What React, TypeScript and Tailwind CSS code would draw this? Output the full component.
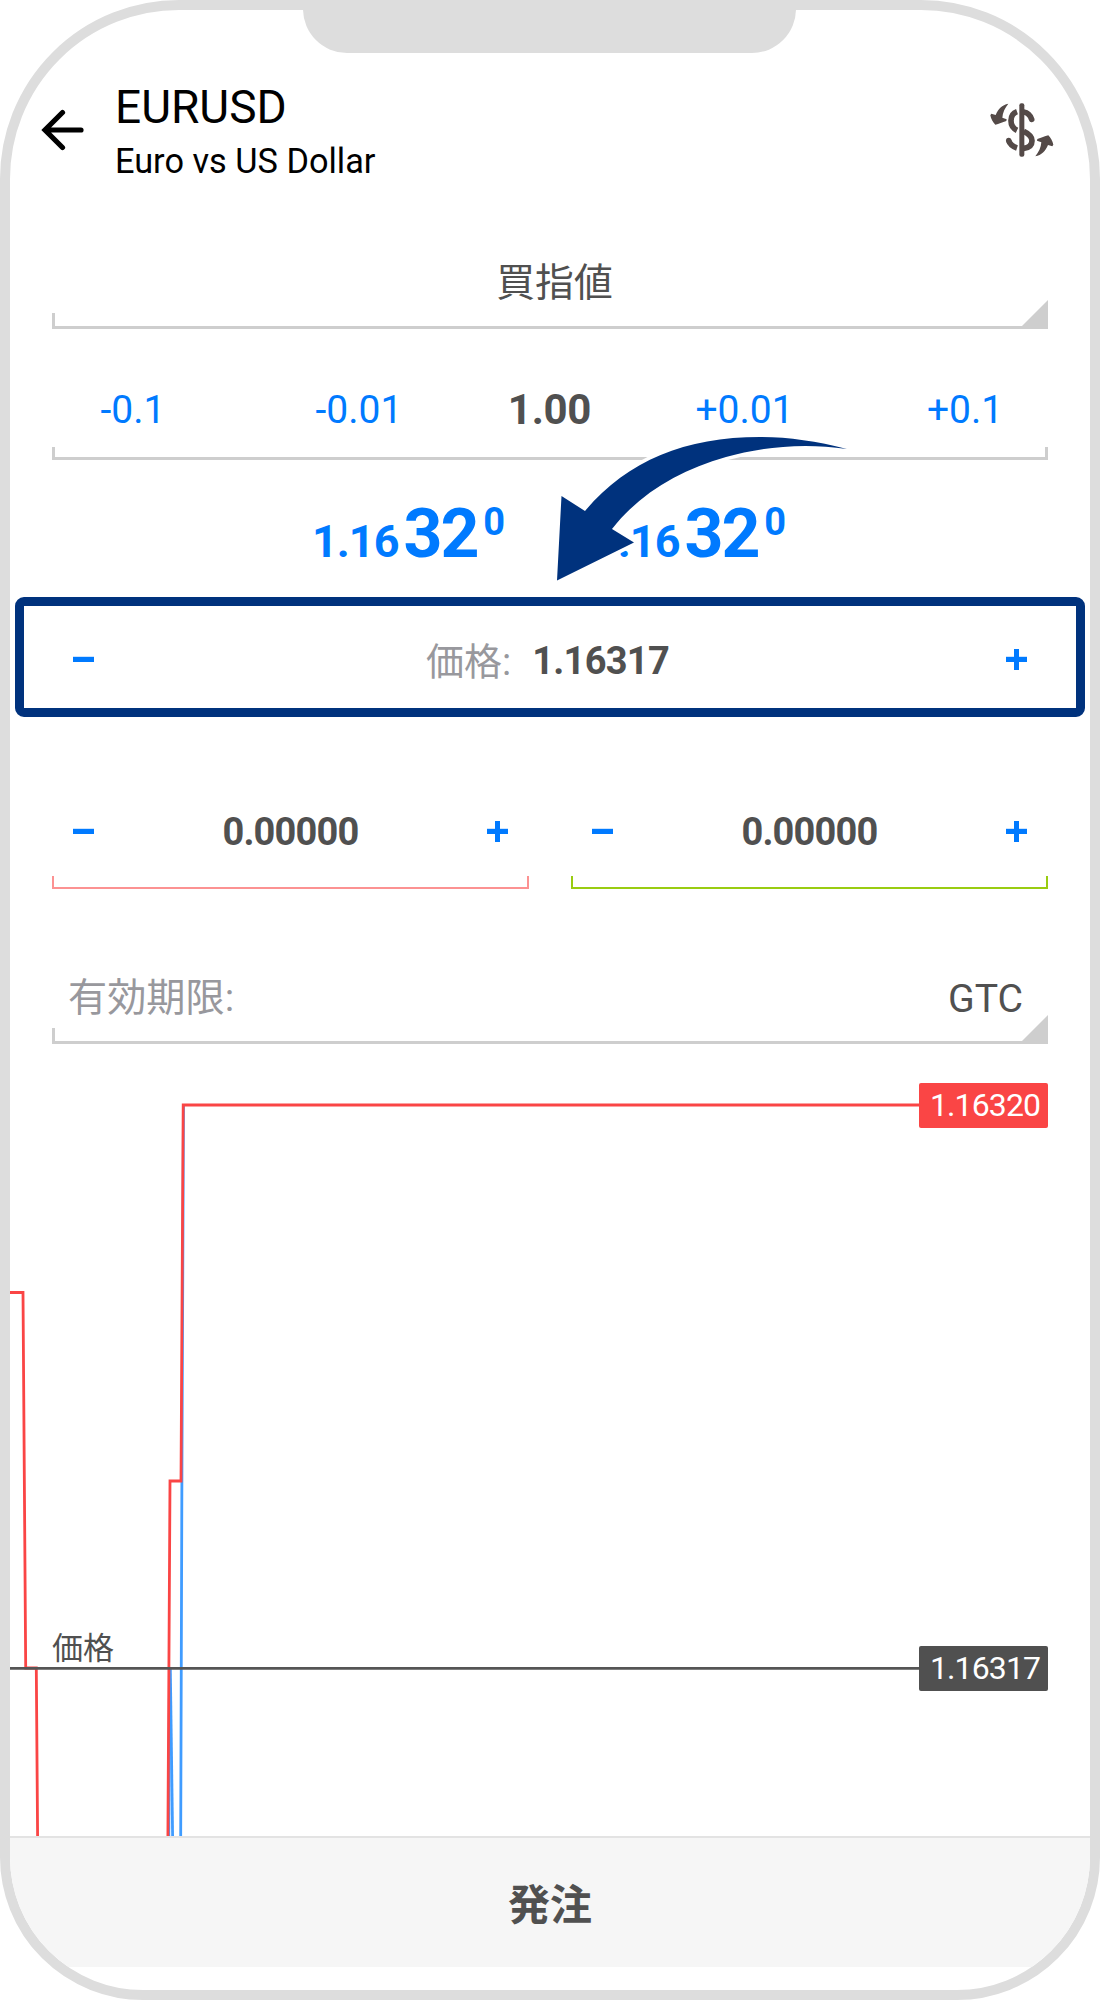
import { useState } from "react";
import clsx from "clsx";

const Bracket = ({ className }: { className: string }) => (
  <div className={clsx("w-full border-t-0", className)} />
);

const Corner = () => (
  <svg className="absolute right-0 bottom-0" width="26" height="29" viewBox="0 0 26 29">
    <path d="M26 0V29H0V26Z" fill="#cecece" />
  </svg>
);

interface StepButtonProps {
  kind: "minus" | "plus";
  onClick: () => void;
}

const StepButton: React.FC<StepButtonProps> = ({ kind, onClick }) => (
  <button type="button" onClick={onClick} aria-label={kind}>
    <svg width="21" height="21" viewBox="0 0 21 21" fill="#007aff">
      <rect x="0" y="7.8" width="21" height="5.2" />
      {kind === "plus" && <rect x="8" y="0" width="5" height="21" />}
    </svg>
  </button>
);

const BackArrow = () => (
  <svg width="44" height="42" viewBox="0 0 44 42" fill="none" stroke="#000" strokeWidth="5.2" strokeLinecap="round">
    <path d="M21.5 3.5L4 21L21.5 38.5M5 21H40" />
  </svg>
);

const TradeIcon = () => (
  <svg width="64" height="54" viewBox="89 67 192 162" fill="#544a48">
    <rect x="177" y="68" width="15" height="160" rx="6" />
    <g fill="none" stroke="#544a48" strokeWidth="17">
      <path d="M170 93C147 101 145 137 170 149" />
      <path d="M190 94C202 96 210 104 214 116" strokeLinecap="round" />
      <path d="M190 152C207 160 215 168 215 180C215 193 206 201 190 203" />
      <path d="M145 180C149 192 158 198 170 202" />
    </g>
    <circle cx="145" cy="179" r="8" />
    <path d="M144 69C125 73 114 84 106 103L93 99L90 104C92 115 98 125 105 132L113 130C121 126 129 125 138 121L139 116L126 111C127 95 134 81 144 69Z" />
    <path d="M225 227C244 223 255 212 263 193L276 197L279 192C277 181 271 171 264 164L256 166C248 170 240 171 231 175L230 180L243 185C242 201 235 215 225 227Z" />
  </svg>
);

const PointerArrow = () => (
  <svg className="absolute left-[536px] top-[417px]" width="310" height="164" viewBox="546 427 310 164">
    <g fill="none" stroke="#fff" strokeWidth="7">
      <path d="M585 511C627 461 685 437 757 437C787 437 816 441 846 449" />
      <path d="M846 449C800 442 758 448 726 457C680 470 640 493 612 529" />
      <path d="M632 543.5L557 581" />
    </g>
    <path
      fill="#00327d"
      d="M557 580.5L561.5 496L585 511C627 461 685 437 760 437C788 437 816 441 847 449C800 442 758 448 726 457C680 470 640 493 612 529L634 542.5Z"
    />
  </svg>
);

const Quote = () => (
  <div className="flex h-[54px] w-[193px] items-baseline whitespace-nowrap font-bold text-[#007aff]">
    <span className="w-[92px] text-[45px] leading-[54px] tracking-[-1px]">1.16</span>
    <span className="w-[80px] text-[68px] leading-[54px] tracking-[-2px]">32</span>
    <span className="self-start text-[38px] leading-[30px]">0</span>
  </div>
);

const Chart = ({ price }: { price: number }) => (
  <div className="relative h-[792px] w-full shrink-0">
    <svg width="1080" height="792" viewBox="10 1044 1080 792" fill="none" strokeWidth="2.8">
      <g stroke="#409cff">
        <path d="M183.5 1105L182 1450L180.7 1836" />
        <path d="M170.3 1668L172.6 1836" />
        <path d="M169.5 1668L168.8 1836" />
      </g>
      <g stroke="#fa4545">
        <path d="M10 1292.5H23L25.7 1668H36.3L37.6 1836" />
        <path d="M919 1105H183.2L181 1481H170L167.9 1836" />
      </g>
      <path d="M10 1668.3H919" stroke="#555" />
    </svg>
    <span className="absolute left-[42px] top-[585px] text-[31px] leading-[40px] text-[#505050]">価格</span>
    <span className="absolute right-[42px] top-[39px] h-[45px] w-[129px] rounded-[2px] bg-[#fa4545] pl-[11px] text-[32px] leading-[45px] tracking-[-0.9px] text-white">
      1.16320
    </span>
    <span className="absolute right-[42px] top-[602px] h-[45px] w-[129px] rounded-[2px] bg-[#505050] pl-[11px] text-[32px] leading-[45px] tracking-[-0.9px] text-white">
      {price.toFixed(5)}
    </span>
  </div>
);

const App: React.FC = () => {
  const [volume, setVolume] = useState(1);
  const [price, setPrice] = useState(1.16317);
  const [stopLoss, setStopLoss] = useState(0);
  const [takeProfit, setTakeProfit] = useState(0);

  const levels = [
    { value: stopLoss, set: setStopLoss, line: "border-[#fc9292]" },
    { value: takeProfit, set: setTakeProfit, line: "border-[#99cc11]" },
  ];

  return (
    <div className="relative flex h-[2000px] w-[1100px] flex-col overflow-hidden rounded-t-[179px] rounded-b-[143px] border-10 border-[#dddddd] bg-white font-['Roboto','Noto_Sans_CJK_JP',sans-serif] text-[#505050]">
      <div className="absolute left-[293px] top-[-1px] h-[44px] w-[493px] rounded-b-[44px] bg-[#dddddd]" />

      <header className="flex items-center pt-[70px] pr-[36px] pl-[31px] text-black">
        <div className="mb-[9px]">
          <BackArrow />
        </div>
        <div className="ml-[30px] grow">
          <h1 className="text-[46px] leading-[54px]">EURUSD</h1>
          <p className="text-[34.3px] leading-[54px]">Euro vs US Dollar</p>
        </div>
        <div className="mb-[9px]">
          <TradeIcon />
        </div>
      </header>

      <div className="relative mx-[42px] mt-[63px]">
        <div className="flex h-[62px] items-center justify-center pt-[2px] pl-[9px] text-[38.8px]">買指値</div>
        <Bracket className="h-[16px] border-b-3 border-l-3 border-[#cecece]" />
        <Corner />
      </div>

      <div className="mx-[42px] mt-[42px]">
        <div className="grid h-[76px] grid-cols-[162px_290px_91px_299px_142px] items-center pt-[2px] text-center text-[39px] text-[#007aff]">
          <button type="button" onClick={() => setVolume(volume - 0.1)}>-0.1</button>
          <button type="button" onClick={() => setVolume(volume - 0.01)}>-0.01</button>
          <span className="pb-px text-[42px] font-bold tracking-[-0.3px] text-[#505050]">{volume.toFixed(2)}</span>
          <button type="button" onClick={() => setVolume(volume + 0.01)}>+0.01</button>
          <button type="button" onClick={() => setVolume(volume + 0.1)}>+0.1</button>
        </div>
        <Bracket className="h-[13px] border-x-3 border-b-3 border-[#cecece]" />
      </div>

      <div className="mt-[47px] mb-[36px] flex justify-center gap-[88px] pr-[2px]">
        <Quote />
        <Quote />
      </div>

      <div className="mx-[5px] flex h-[120px] shrink-0 items-center justify-between rounded-[9px] border-[9px] border-[#00327d] px-[49px] pt-[5px]">
        <StepButton kind="minus" onClick={() => setPrice(price - 0.00001)} />
        <div className="flex items-center pt-[3px] pr-[5px]">
          <span className="mr-[21px] pt-[2px] text-[38px] text-[#98989d]">価格:</span>
          <span className="text-[38px] font-bold tracking-[-0.7px]">{price.toFixed(5)}</span>
        </div>
        <StepButton kind="plus" onClick={() => setPrice(price + 0.00001)} />
      </div>

      <div className="mx-[42px] mt-[70px] grid grid-cols-2 gap-[42px]">
        {levels.map((level) => (
          <div key={level.line}>
            <div className="flex h-[89px] items-center justify-between px-[21px]">
              <StepButton kind="minus" onClick={() => level.set(level.value - 0.00001)} />
              <span className="pt-[2px] text-[38px] font-bold tracking-[-0.8px]">{level.value.toFixed(5)}</span>
              <StepButton kind="plus" onClick={() => level.set(level.value + 0.00001)} />
            </div>
            <Bracket className={clsx("h-[13px] border-x-2 border-b-2", level.line)} />
          </div>
        ))}
      </div>

      <div className="relative mx-[42px] mt-[79px]">
        <div className="flex h-[60px] items-center justify-between pr-[25px] pl-[16px] text-[39.2px]">
          <span className="text-[#98989d]">有効期限:</span>
          <span className="pt-[2px]">GTC</span>
        </div>
        <Bracket className="h-[16px] border-b-3 border-l-3 border-[#cecece]" />
        <Corner />
      </div>

      <Chart price={price} />

      <button
        type="button"
        className="h-[131px] shrink-0 border-t-2 border-[#e3e3e3] bg-[#f6f6f6] pt-[6px] text-[42px] leading-[50px] font-bold"
      >
        発注
      </button>

      <PointerArrow />
    </div>
  );
};

export default App;
